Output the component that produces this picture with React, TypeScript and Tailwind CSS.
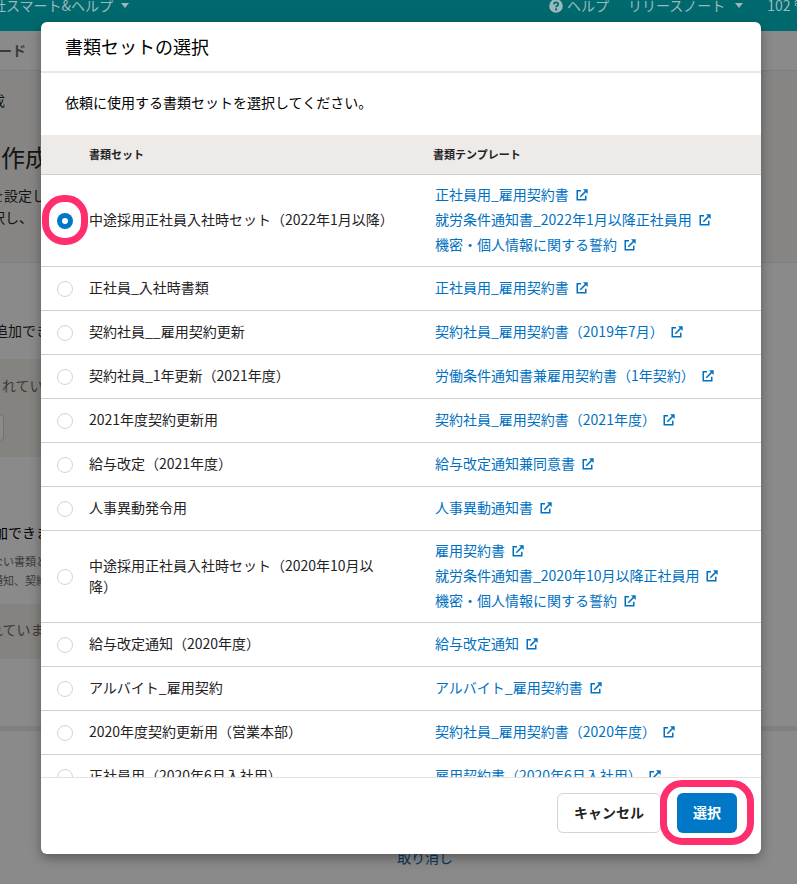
type DocSet = { name: string; links: string[]; checked?: boolean };

const sets: DocSet[] = [
  {
    name: "中途採用正社員入社時セット（2022年1月以降）",
    links: ["正社員用_雇用契約書", "就労条件通知書_2022年1月以降正社員用", "機密・個人情報に関する誓約"],
    checked: true,
  },
  { name: "正社員_入社時書類", links: ["正社員用_雇用契約書"] },
  { name: "契約社員__雇用契約更新", links: ["契約社員_雇用契約書（2019年7月）"] },
  { name: "契約社員_1年更新（2021年度）", links: ["労働条件通知書兼雇用契約書（1年契約）"] },
  { name: "2021年度契約更新用", links: ["契約社員_雇用契約書（2021年度）"] },
  { name: "給与改定（2021年度）", links: ["給与改定通知兼同意書"] },
  { name: "人事異動発令用", links: ["人事異動通知書"] },
  {
    name: "中途採用正社員入社時セット（2020年10月以降）",
    links: ["雇用契約書", "就労条件通知書_2020年10月以降正社員用", "機密・個人情報に関する誓約"],
  },
  { name: "給与改定通知（2020年度）", links: ["給与改定通知"] },
  { name: "アルバイト_雇用契約", links: ["アルバイト_雇用契約書"] },
  { name: "2020年度契約更新用（営業本部）", links: ["契約社員_雇用契約書（2020年度）"] },
  { name: "正社員用（2020年6月入社用）", links: ["雇用契約書（2020年6月入社用）"] },
];

function ExternalIcon() {
  return (
    <svg viewBox="0 0 12 12" className="size-3 shrink-0" fill="none" stroke="currentColor" strokeWidth="1.5">
      <path d="M5 1.75H1.25v9h8.5V6.75" />
      <path d="M4.3 7.7L9.6 2.4" />
      <path d="M7 .3h4.7V5z" fill="currentColor" stroke="none" />
    </svg>
  );
}

function Caret() {
  return (
    <svg viewBox="0 0 8 5" className="h-[5px] w-2 shrink-0" fill="currentColor">
      <path d="M0 0h8L4 5z" />
    </svg>
  );
}

function Radio({ checked }: { checked?: boolean }) {
  return checked ? (
    <span className="flex size-4 items-center justify-center rounded-full bg-[#0077c7]">
      <span className="size-1.5 rounded-full bg-white" />
    </span>
  ) : (
    <span className="size-4 rounded-full border border-[#d6d3d0] bg-white" />
  );
}

function Row({ set }: { set: DocSet }) {
  return (
    <li className="flex shrink-0 items-center border-b border-[#d0cfcd] pb-[9px] pt-[7px]">
      <div className="relative flex w-12 justify-center pt-[3px]">
        <Radio checked={set.checked} />
        {set.checked && (
          <span className="absolute -top-[15px] left-px h-[50px] w-[46px] rounded-[22px] border-[7px] border-[#ff2f6e]" />
        )}
      </div>
      <div className="w-[346px] pr-[44px] leading-[21px] text-[#23221f]">{set.name}</div>
      <div className="flex flex-col text-[#0071c1]">
        {set.links.map((link) => (
          <a key={link} className="flex h-[25px] items-center gap-[7px] whitespace-nowrap leading-[21px] only:-my-px only:h-[29px]">
            {link}
            <ExternalIcon />
          </a>
        ))}
      </div>
    </li>
  );
}

function Background() {
  return (
    <div className="flex h-full flex-col whitespace-nowrap bg-[#8a8a8a] text-sm text-[#141412]">
      <header className="flex h-[31px] shrink-0 items-start justify-between bg-[#00696e] text-[#9bb9ba]">
        <div className="-ml-2 -mt-[5px] flex items-center gap-2 leading-[21px]">
          社スマート&amp;ヘルプ
          <Caret />
        </div>
        <div className="-mt-[5px] flex w-[248px] shrink-0 items-center overflow-hidden leading-[21px]">
          <svg viewBox="0 0 14 14" className="mr-1 size-[14px] shrink-0">
            <circle cx="7" cy="7" r="6.8" fill="#9bb9ba" />
            <path
              d="M4.9 5.4C5 4 6 3.4 7.1 3.4c1.2 0 2.1.7 2.1 1.8 0 1.500-2.100 1.600-2.100 3.100"
              fill="none"
              stroke="#00696e"
              strokeWidth="1.7"
            />
            <circle cx="7.1" cy="10.4" r="1.1" fill="#00696e" />
          </svg>
          <span className="shrink-0">ヘルプ</span>
          <span className="ml-[19px] mr-[10px] shrink-0">リリースノート</span>
          <Caret />
          <span className="ml-6 shrink-0">102 管</span>
        </div>
      </header>
      <nav className="flex h-10 shrink-0 items-center border-b border-[#7e7e7d] pb-0.5 font-bold text-[#3d3b37]">
        <span className="-ml-[2px]">ード</span>
      </nav>
      <section className="h-[192px] shrink-0 border-b border-[#7e7e7c] bg-[#868583] leading-[22px]">
        <p className="-ml-[9px] pt-[18px]">成</p>
        <h1 className="ml-px mt-[28px] text-2xl leading-9">作成</h1>
        <p className="-ml-[10px] mt-[9px]">を設定して</p>
        <p className="-ml-[9px] [text-spacing-trim:space-all]">択し、「</p>
      </section>
      <section className="h-[463px] shrink-0">
        <p className="-ml-[6px] pt-[57px] leading-[21px]">追加できます</p>
        <div className="mt-[18px] h-[98px] w-[740px] bg-[#848380] pt-4 text-[#3d3b37]">
          <p className="ml-[2px] leading-[21px]">れていません</p>
          <div className="-ml-10 mt-[18px] h-[27px] w-11 rounded border border-[#737270] bg-[#8a8a8a]" />
        </div>
        <p className="-ml-[6px] mt-[65px] leading-[21px] text-black">加できます</p>
        <p className="-ml-2 mt-[9px] text-[11px] leading-[19px] text-[#3d3b37]">
          ない書類として
          <br />
          通知、契約書
        </p>
        <div className="mt-[14px] h-[55px] w-[740px] bg-[#848380] pt-[15px] leading-[21px] text-[#3d3b37]">
          <p className="-ml-[11px]">れています</p>
        </div>
      </section>
      <div className="h-[5px] shrink-0 bg-[#808080]" />
      <p className="ml-[397px] mt-[116px] leading-[21px] text-[#07355b]">取り消し</p>
    </div>
  );
}

export default function App() {
  return (
    <div
      lang="ja"
      className="relative h-[884px] w-[797px] overflow-hidden font-['Noto_Sans_CJK_JP',sans-serif] text-sm"
    >
      <Background />
      <div
        role="dialog"
        className="absolute left-[41px] top-[22px] flex h-[832px] w-[720px] flex-col rounded-md bg-white shadow-[0_4px_12px_rgba(0,0,0,0.35)]"
      >
        <h2 className="h-[51px] shrink-0 border-b-2 border-[#e8e8e6] px-6 pt-[11px] text-lg leading-[27px] text-black">
          書類セットの選択
        </h2>
        <p className="h-[62px] shrink-0 px-6 pt-[19px] leading-[21px] text-black">
          依頼に使用する書類セットを選択してください。
        </p>
        <div className="flex h-10 shrink-0 items-center border-b border-[#d0cfcd] bg-[#edeae7] pl-12 text-[11px] font-bold text-[#23221f]">
          <span className="w-[344px]">書類セット</span>
          <span>書類テンプレート</span>
        </div>
        <ul className="flex min-h-0 flex-1 flex-col overflow-hidden">
          {sets.map((set) => (
            <Row key={set.name} set={set} />
          ))}
        </ul>
        <footer className="flex h-[77px] shrink-0 items-start justify-end gap-4 border-t border-[#e3e2e0] pr-6 pt-[15px] font-bold">
          <button className="h-10 w-[104px] rounded-md border border-[#d6d3d0] bg-white pb-0.5 text-[#23221f]">キャンセル</button>
          <div className="relative">
            <button className="h-10 w-[60px] rounded-md bg-[#0077c7] pb-0.5 text-white">選択</button>
            <span className="absolute -left-[17px] -top-[13px] h-[65px] w-[94px] rounded-[22px] border-[7px] border-[#ff2f6e]" />
          </div>
        </footer>
      </div>
    </div>
  );
}
